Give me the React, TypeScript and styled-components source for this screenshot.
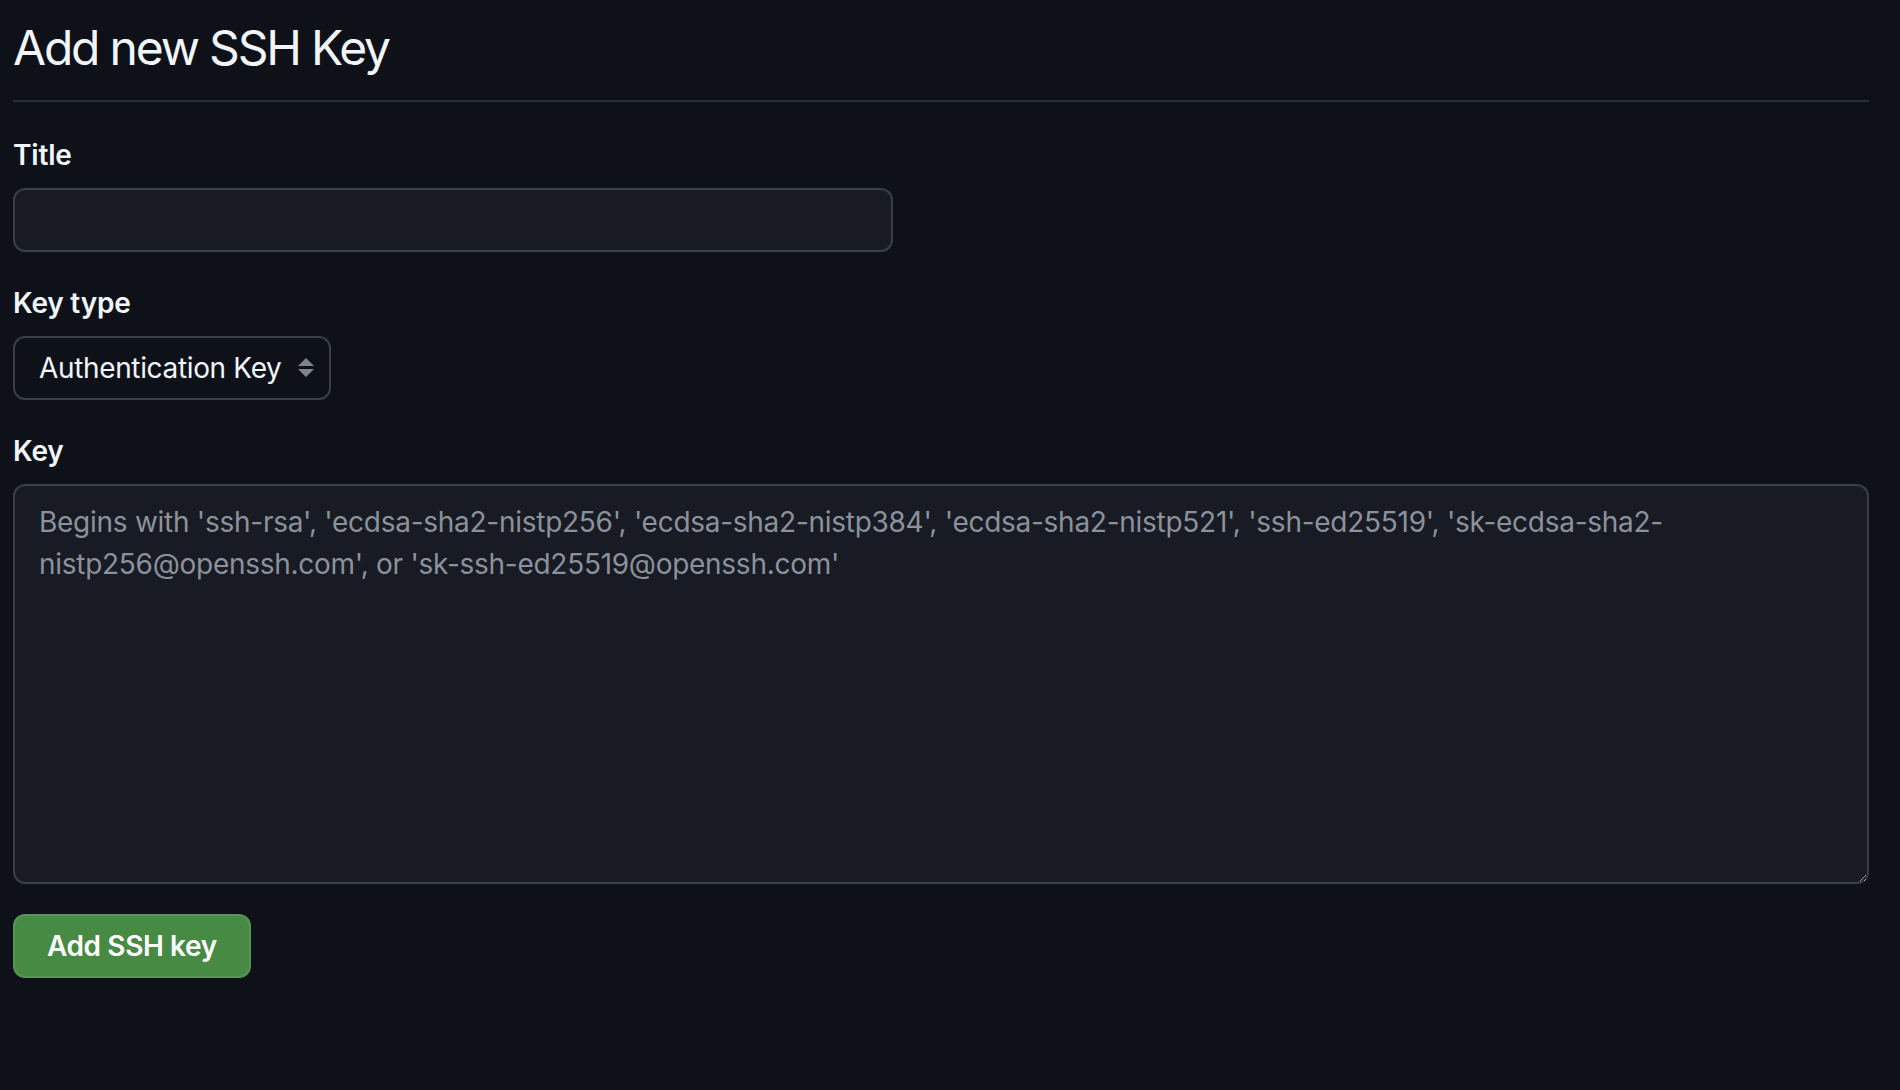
import React from "react";
import styled, { createGlobalStyle } from "styled-components";

const GlobalStyle = createGlobalStyle`
  html, body {
    margin: 0;
    padding: 0;
    background: #0e1117;
  }
  body {
    font-family: Inter, "Noto Sans", "Liberation Sans", sans-serif;
    color: #f0f6fc;
  }
  * { box-sizing: border-box; }
`;

const Page = styled.div`
  min-height: 1090px;
  padding: 0 31px 0 13px;
  background: #0e1117;
`;

const Subhead = styled.div`
  padding: 18px 0 22px;
  margin-bottom: 32px;
  border-bottom: 2px solid #2a2e35;
`;

const Heading = styled.h1`
  margin: 0;
  font-size: 48px;
  line-height: 60px;
  font-weight: 400;
  color: #f0f6fc;
  letter-spacing: -2.2px;
`;

const Form = styled.form`
  display: flex;
  flex-direction: column;
  gap: 30px;
`;

const FormGroup = styled.div`
  display: flex;
  flex-direction: column;
  align-items: flex-start;
`;

const Label = styled.label`
  font-size: 28px;
  line-height: 42px;
  font-weight: 600;
  color: #f0f6fc;
  margin-bottom: 12px;
  letter-spacing: -0.2px;
`;

const TextInput = styled.input`
  width: 880px;
  height: 64px;
  padding: 10px 24px;
  font-family: inherit;
  font-size: 28px;
  color: #f0f6fc;
  background: #181b23;
  border: 2px solid #3a3f47;
  border-radius: 12px;
  outline: none;
`;

const SelectWrap = styled.div`
  position: relative;
  display: inline-flex;
`;

const Select = styled.select`
  appearance: none;
  -webkit-appearance: none;
  height: 64px;
  width: 318px;
  padding: 0 40px 0 24px;
  font-family: inherit;
  font-size: 28px;
  letter-spacing: -0.35px;
  color: #f0f6fc;
  background: #0e1117;
  border: 2px solid #3a3f47;
  border-radius: 12px;
  outline: none;
`;

const SelectIcon = styled.svg`
  position: absolute;
  right: 17px;
  top: 22px;
  pointer-events: none;
`;

const TextArea = styled.textarea`
  width: 100%;
  height: 400px;
  padding: 15px 24px;
  font-family: inherit;
  font-size: 28px;
  line-height: 42px;
  letter-spacing: -0.27px;
  color: #f0f6fc;
  background: #181b23;
  border: 2px solid #3a3f47;
  border-radius: 12px;
  outline: none;
  resize: vertical;
  &::placeholder {
    color: #8b929b;
  }
`;

const SubmitButton = styled.button`
  align-self: flex-start;
  height: 64px;
  padding: 0 32px;
  font-family: inherit;
  font-size: 28px;
  font-weight: 600;
  letter-spacing: -0.4px;
  color: #ffffff;
  background: #478a44;
  border: 2px solid rgba(240, 246, 252, 0.1);
  border-radius: 12px;
  cursor: pointer;
`;

export default function App() {
  return (
    <>
      <GlobalStyle />
      <Page>
        <Subhead>
          <Heading>Add new SSH Key</Heading>
        </Subhead>
        <Form onSubmit={(e) => e.preventDefault()}>
          <FormGroup>
            <Label htmlFor="title">Title</Label>
            <TextInput id="title" type="text" />
          </FormGroup>
          <FormGroup>
            <Label htmlFor="keytype">Key type</Label>
            <SelectWrap>
              <Select id="keytype" defaultValue="auth">
                <option value="auth">Authentication Key</option>
                <option value="sign">Signing Key</option>
              </Select>
              <SelectIcon width="16" height="19" viewBox="0 0 16 19">
                <polygon points="8,0 16,8 0,8" fill="#7d8590" />
                <polygon points="0,11 16,11 8,19" fill="#7d8590" />
              </SelectIcon>
            </SelectWrap>
          </FormGroup>
          <FormGroup>
            <Label htmlFor="key">Key</Label>
            <TextArea
              id="key"
              placeholder="Begins with 'ssh-rsa', 'ecdsa-sha2-nistp256', 'ecdsa-sha2-nistp384', 'ecdsa-sha2-nistp521', 'ssh-ed25519', 'sk-ecdsa-sha2-nistp256@openssh.com', or 'sk-ssh-ed25519@openssh.com'"
            />
          </FormGroup>
          <SubmitButton type="submit">Add SSH key</SubmitButton>
        </Form>
      </Page>
    </>
  );
}
